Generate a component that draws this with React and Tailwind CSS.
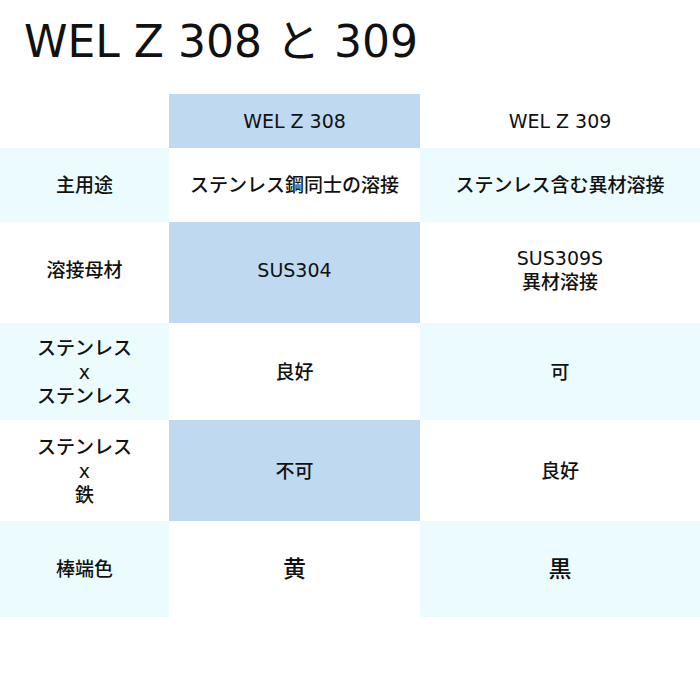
const BLUE = "bg-[#bfdaf0]";
const CYAN = "bg-[#ecfcfe]";

const rows = [
  { h: "h-[54px]", bg: ["bg-white", BLUE, "bg-white"], cells: ["", "WEL Z 308", "WEL Z 309"] },
  { h: "h-[74px]", bg: [CYAN, "bg-white", CYAN], cells: ["主用途", "ステンレス鋼同士の溶接", "ステンレス含む異材溶接"] },
  { h: "h-[101px]", bg: ["bg-white", BLUE, "bg-white"], cells: ["溶接母材", "SUS304", "SUS309S\n異材溶接"], pb: true },
  { h: "h-[97px]", bg: [CYAN, "bg-white", CYAN], cells: ["ステンレス\nx\nステンレス", "良好", "可"] },
  { h: "h-[101px]", bg: ["bg-white", BLUE, "bg-white"], cells: ["ステンレス\nx\n鉄", "不可", "良好"] },
  { h: "h-[96px]", bg: [CYAN, "bg-white", CYAN], cells: ["棒端色", "黄", "黒"], big: true },
];

export default function App() {
  return (
    <div
      className="w-[700px] h-[700px] bg-white text-[#111]"
      style={{ fontFamily: '"DejaVu Sans", "Noto Sans CJK JP", sans-serif' }}
    >
      <h1 className="pl-[24px] pt-[12px] h-[94px] text-[44px] leading-[60px] font-normal">
        WEL Z 308 と 309
      </h1>
      <div className="grid grid-cols-[169px_251px_1fr]">
        {rows.map((r, i) =>
          r.cells.map((c, j) => (
            <div
              key={`${i}-${j}`}
              className={`${r.h} ${r.bg[j]} flex items-center justify-center text-center whitespace-pre-line font-medium ${
                r.big && j > 0 ? "text-[23px]" : "text-[19px]"
              } leading-[24px] ${r.pb ? "pb-[6px]" : ""}`}
            >
              {c}
            </div>
          ))
        )}
      </div>
    </div>
  );
}
